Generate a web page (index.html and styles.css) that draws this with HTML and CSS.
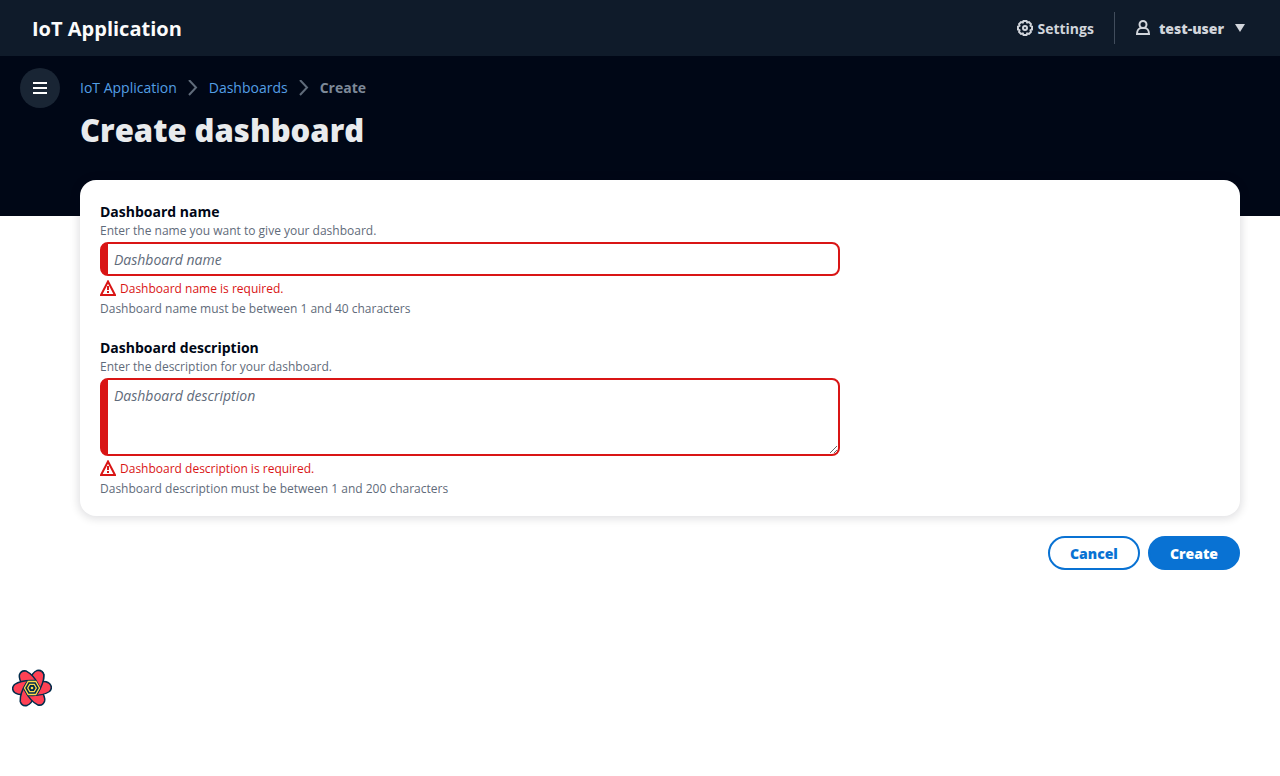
FILE: index.html
```html
<!DOCTYPE html>
<html lang="en">
<head>
<meta charset="utf-8">
<meta name="viewport" content="width=device-width, initial-scale=1">
<title>IoT Application</title>
<link rel="stylesheet" href="styles.css">
</head>
<body>
<header class="topbar">
  <a class="brand" href="#">IoT Application</a>
  <div class="utilities">
    <button class="utility" type="button">
      <svg class="icon" viewBox="0 0 16 16" aria-hidden="true"><path d="M6.500 1h3l.7 1.500 1.800-.4 1.900 1.900-.4 1.800 1.500.7v3l-1.500.7.4 1.800-1.900 1.900-1.800-.4-.7 1.500h-3l-.7-1.500-1.800.4L2.100 12l.4-1.800L1 9.500v-3l1.500-.7L2.100 4 4 2.100l1.800.4z"/><circle cx="8" cy="8" r="2"/></svg>
      <span class="utility-text">Settings</span>
    </button>
    <span class="divider"></span>
    <button class="utility user" type="button">
      <svg class="icon" viewBox="0 0 16 16" aria-hidden="true"><circle cx="8" cy="4.500" r="3.500"/><path d="M2 14c0-3.500 2-6 4.500-6h3c2.500 0 4.500 2.500 4.500 6z"/></svg>
      <span class="utility-text">test-user</span>
      <svg class="caret" viewBox="0 0 16 16" aria-hidden="true"><path d="M3 4h10l-5 8z"/></svg>
    </button>
  </div>
</header>

<div class="hero">
  <button class="menu" type="button" aria-label="Open navigation">
    <svg class="icon" viewBox="0 0 16 16" aria-hidden="true"><path d="M1 3h14M1 8h14M1 13h14"/></svg>
  </button>
  <div class="hero-text">
    <nav aria-label="Breadcrumbs">
      <ol class="crumbs">
        <li><a href="#">IoT Application</a><svg class="chevron" viewBox="0 0 16 16" aria-hidden="true"><path d="M4 0l7 7.500L4 15"/></svg></li>
        <li><a href="#">Dashboards</a><svg class="chevron" viewBox="0 0 16 16" aria-hidden="true"><path d="M4 0l7 7.500L4 15"/></svg></li>
        <li class="current" aria-current="page">Create</li>
      </ol>
    </nav>
    <h1>Create dashboard</h1>
  </div>
</div>

<main class="content">
  <form>
    <div class="card">
      <div class="field">
        <label for="name">Dashboard name</label>
        <p class="hint" id="name-hint">Enter the name you want to give your dashboard.</p>
        <input class="control" id="name" type="text" placeholder="Dashboard name" aria-describedby="name-hint" aria-invalid="true">
        <p class="error"><svg class="icon" viewBox="0 0 16 16" aria-hidden="true"><path d="M8 1.500L15 15H1z"/><path d="M8 6v4M8 11v2"/></svg><span class="error-text">Dashboard name is required.</span></p>
        <p class="limit">Dashboard name must be between 1 and 40 characters</p>
      </div>
      <div class="field">
        <label for="description">Dashboard description</label>
        <p class="hint" id="description-hint">Enter the description for your dashboard.</p>
        <textarea class="control area" id="description" placeholder="Dashboard description" aria-describedby="description-hint" aria-invalid="true"></textarea>
        <p class="error"><svg class="icon" viewBox="0 0 16 16" aria-hidden="true"><path d="M8 1.500L15 15H1z"/><path d="M8 6v4M8 11v2"/></svg><span class="error-text">Dashboard description is required.</span></p>
        <p class="limit">Dashboard description must be between 1 and 200 characters</p>
      </div>
    </div>
    <div class="actions">
      <button class="button" type="button">Cancel</button>
      <button class="button primary" type="button">Create</button>
    </div>
  </form>
</main>

<button class="devtools" type="button" aria-label="Open query devtools">
  <svg viewBox="-20 -20 40 40" aria-hidden="true">
    <defs>
      <path id="petal" d="M6-6.500C11-7 15-6.500 17.500-4.500c2.400 2.600 2.400 5.400 0 8C13 6.500 6 7.800-2 7.400L0 0z"/>
      <clipPath id="half"><path d="M-20 0h40v20h-40z"/></clipPath>
    </defs>
    <g class="petals">
      <use href="#petal" transform="rotate(300)"/><use href="#petal" transform="rotate(240)"/><use href="#petal" transform="rotate(180)"/><use href="#petal" transform="rotate(120)"/><use href="#petal" transform="rotate(60)"/><use href="#petal"/>
      <g transform="rotate(300)"><use href="#petal" clip-path="url(#half)"/></g>
    </g>
    <path class="core" d="M-4.500-8h9L9 0 4.500 8h-9L-9 0z"/>
    <path class="ring" d="M-3.800-6.500h7.600L7.500 0 3.800 6.500h-7.600L-7.500 0z"/>
    <path class="ring" d="M-2.200-3.700h4.400L4.300 0 2.200 3.700h-4.400L-4.300 0z"/>
    <circle class="dot" r="1.300"/>
  </svg>
</button>
</body>
</html>
```
FILE: styles.css
```css
* { box-sizing: border-box; }

body {
  margin: 0;
  background: #fff;
  color: #000716;
  font: 14px/20px "Open Sans", "Noto Sans", sans-serif;
}

button { font: inherit; cursor: pointer; }
h1, p, ol { margin: 0; }
a { text-decoration: none; }

.icon {
  width: 16px;
  height: 16px;
  flex: none;
  fill: none;
  stroke: currentColor;
  stroke-width: 2;
}

.topbar {
  display: flex;
  align-items: center;
  justify-content: space-between;
  height: 56px;
  padding: 0 32px;
  background: #0f1b2a;
}

.brand { padding-top: 2px; color: #fbfbfb; font-size: 20px; font-weight: 700; }
.utilities { display: flex; align-items: center; gap: 20px; }

.utility {
  display: flex;
  align-items: center;
  gap: 4px;
  padding: 0;
  border: 0;
  background: none;
  color: #d1d5db;
  font-weight: 700;
}

.utility-text { padding-top: 2px; }
.user { gap: 8px; font-weight: 800; }
.divider { width: 1px; height: 32px; background: #414d5c; }
.caret { width: 16px; height: 16px; fill: currentColor; }

.hero {
  display: flex;
  align-items: flex-start;
  gap: 20px;
  padding: 12px 40px 65px 20px;
  background: #000716;
}

.menu {
  display: grid;
  place-items: center;
  width: 40px;
  height: 40px;
  padding: 0;
  border: 0;
  border-radius: 50%;
  background: #192534;
  color: #fff;
}

.hero-text { padding-top: 10px; }

.crumbs { display: flex; padding: 0; list-style: none; }
.crumbs li { display: flex; align-items: center; }
.crumbs a { color: #539fe5; }
.crumbs .current { color: #7d8998; font-weight: 700; }

.chevron {
  width: 16px;
  height: 16px;
  margin: 0 8px;
  fill: none;
  stroke: #5f6b7a;
  stroke-width: 2;
}

h1 {
  padding-top: 11px;
  color: #e9ebed;
  font-size: 31px;
  font-weight: 800;
  line-height: 42px;
}

.content { padding: 0 40px 0 80px; margin-top: -36px; }

.card {
  display: flex;
  flex-direction: column;
  gap: 19px;
  padding: 20px 20px 19px;
  border-radius: 16px;
  background: #fff;
  box-shadow: 0 1px 8px 2px rgba(0, 7, 22, 0.12);
}

.field { display: flex; flex-direction: column; max-width: 740px; padding-top: 1px; }
.field label { font-weight: 700; line-height: 22px; }
.hint, .error, .limit { color: #5f6b7a; font-size: 12px; line-height: 16px; }

.control {
  height: 34px;
  margin: 3px 0 4px;
  padding: 4px 12px 4px 6px;
  border: 2px solid #d91515;
  border-left-width: 8px;
  border-radius: 8px;
  outline: 0;
  background: #fff;
  color: #000716;
  font: inherit;
}

.control::placeholder { color: #5f6b7a; font-style: italic; opacity: 1; }
.area { height: 78px; padding-top: 6px; resize: vertical; }
.field .error { display: flex; gap: 4px; color: #d91515; }
.error-text { padding-top: 1px; }
.limit { margin-top: 4px; }

.actions {
  display: flex;
  justify-content: flex-end;
  gap: 8px;
  padding-top: 20px;
}

.button {
  padding: 6px 20px 4px;
  border: 2px solid #0972d3;
  border-radius: 20px;
  background: #fff;
  color: #0972d3;
  font-weight: 800;
}

.primary { background: #0972d3; color: #fff; }

.devtools {
  position: fixed;
  bottom: 68px;
  left: 12px;
  width: 40px;
  height: 40px;
  padding: 0;
  border: 0;
  background: none;
}

.devtools svg { display: block; width: 40px; height: 40px; }
.petals { fill: #ff4154; stroke: #002c4b; stroke-width: 1.5; stroke-linejoin: round; }
.core { fill: #002c4b; }
.ring { fill: none; stroke: #ffd94c; stroke-width: 1.3; }
.dot { fill: #ffd94c; }
```
